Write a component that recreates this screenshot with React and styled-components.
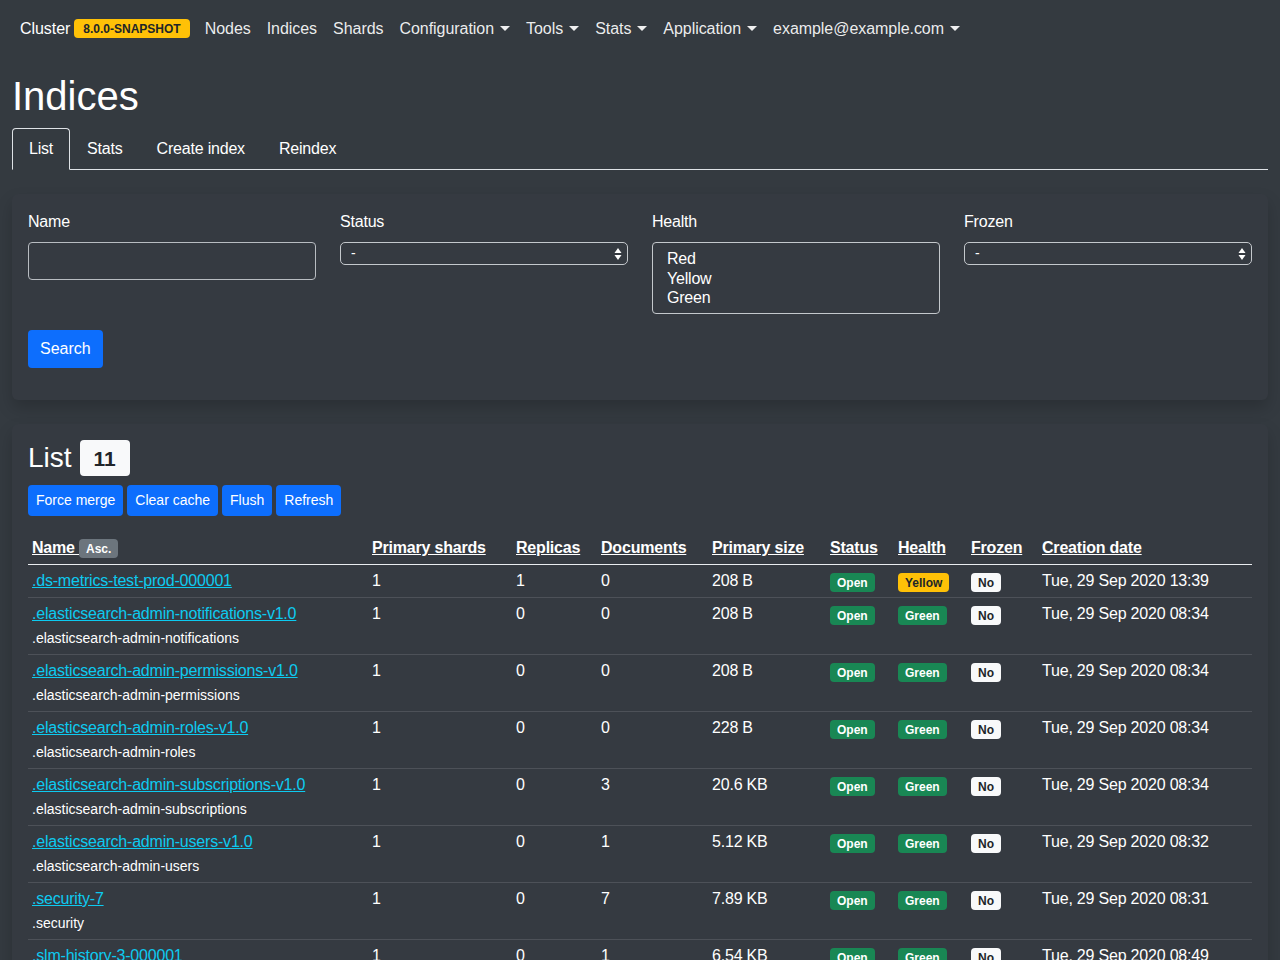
import React from "react";
import styled, { createGlobalStyle } from "styled-components";

const Global = createGlobalStyle`
  html, body { margin: 0; padding: 0; }
  body {
    background: #343a40;
    color: #f8f9fa;
    font-family: "Liberation Sans", Arial, sans-serif;
    font-size: 16px;
    line-height: 1.5;
    letter-spacing: -0.2px;
  }
  * { box-sizing: border-box; }
`;

const Navbar = styled.nav`
  display: flex;
  align-items: center;
  height: 56px;
  padding: 1px 12px 0 20px;
  letter-spacing: -0.05px;
`;

const Brand = styled.div`
  display: flex;
  align-items: center;
  gap: 4px;
  color: #fff;
  margin-right: 7px;
`;

const Badge = styled.span`
  display: inline-block;
  font-size: 12px;
  font-weight: 700;
  line-height: 1;
  letter-spacing: 0;
  padding: 4px ${(p) => p.$px || 7}px 3px;
  border-radius: 4px;
  white-space: nowrap;
  vertical-align: ${(p) => (p.$top ? "top" : "baseline")};
  margin-top: ${(p) => (p.$top ? "4px" : "0")};
  background: ${(p) => p.$bg};
  color: ${(p) => p.$fg || "#fff"};
`;

const NavLink = styled.a`
  display: flex;
  align-items: center;
  padding: 8px;
  color: rgba(255, 255, 255, 0.92);
  text-decoration: none;
  cursor: pointer;
`;

const Caret = styled.span`
  display: inline-block;
  margin-left: 6px;
  width: 0;
  height: 0;
  border-top: 5px solid currentColor;
  border-left: 5px solid transparent;
  border-right: 5px solid transparent;
`;

const Container = styled.main`
  padding: 16px 12px 0;
`;

const Title = styled.h1`
  margin: 0 0 8px;
  font-size: 40px;
  font-weight: 500;
  line-height: 1.2;
  letter-spacing: 0;
  color: #fff;
`;

const Tabs = styled.ul`
  display: flex;
  list-style: none;
  margin: 0;
  padding: 0;
  border-bottom: 1px solid #dee2e6;
`;

const Tab = styled.li`
  margin-bottom: -1px;
  padding: 8px 16px;
  border: 1px solid ${(p) => (p.$active ? "#dee2e6" : "transparent")};
  border-bottom-color: ${(p) => (p.$active ? "#343a40" : "transparent")};
  border-radius: 4px 4px 0 0;
  background: ${(p) => (p.$active ? "#343a40" : "transparent")};
  color: #fff;
  cursor: pointer;
`;

const Card = styled.section`
  margin-top: 24px;
  padding: 16px;
  background: #353a41;
  border-radius: 6px;
  box-shadow: 0 8px 16px rgba(0, 0, 0, 0.18);
`;

const FilterGrid = styled.div`
  display: grid;
  grid-template-columns: repeat(4, 1fr);
  column-gap: 24px;
`;

const Field = styled.div`
  display: flex;
  flex-direction: column;
`;

const Label = styled.label`
  margin-bottom: 8px;
  color: #fff;
`;

const TextInput = styled.input`
  height: 38px;
  padding: 6px 12px;
  border: 1px solid #b8bcc1;
  border-radius: 4px;
  background: transparent;
  color: #fff;
  font: inherit;
`;

const SelectBox = styled.div`
  display: flex;
  align-items: center;
  justify-content: space-between;
  height: 23px;
  padding: 0 5px 0 10px;
  border: 1px solid #c4c8cc;
  border-radius: 5px;
  font-size: 14px;
  color: #fff;
`;

const MultiSelect = styled.div`
  display: flex;
  flex-direction: column;
  height: 72px;
  padding: 6px 14px;
  border: 1px solid #c4c8cc;
  border-radius: 4px;
  color: #fff;
  line-height: 19.5px;
`;

const PrimaryButton = styled.button`
  margin: 16px 0 16px;
  height: 38px;
  padding: 0 12px;
  border: none;
  border-radius: 4px;
  background: #0d6efd;
  color: #fff;
  font: inherit;
  cursor: pointer;
`;

const ListHeader = styled.h3`
  display: flex;
  align-items: center;
  gap: 8px;
  margin: 0 0 8px;
  font-size: 28px;
  font-weight: 500;
  line-height: 1.2;
  letter-spacing: 0;
  color: #fff;
`;

const CountBadge = styled.span`
  display: inline-block;
  padding: 8px 14px 7px;
  border-radius: 4px;
  background: #f8f9fa;
  color: #212529;
  font-size: 21px;
  font-weight: 700;
  line-height: 1;
`;

const ButtonBar = styled.div`
  display: flex;
  gap: 4px;
  margin-top: 9px;
`;

const SmallButton = styled.button`
  height: 31px;
  padding: 0 8px;
  border: none;
  border-radius: 4px;
  background: #0d6efd;
  color: #fff;
  font: inherit;
  font-size: 14px;
  cursor: pointer;
`;

const Table = styled.table`
  width: 100%;
  margin-top: 16px;
  border-collapse: collapse;
  table-layout: fixed;
  color: #fff;
`;

const Th = styled.th`
  padding: 4px;
  text-align: left;
  font-weight: 700;
  white-space: nowrap;
  border-bottom: 1px solid #e9ecef;
`;

const SortLink = styled.a`
  color: #fff;
  text-decoration: underline;
  cursor: pointer;
`;

const Tr = styled.tr`
  border-bottom: 1px solid rgba(255, 255, 255, 0.12);
`;

const Td = styled.td`
  padding: 4px;
  vertical-align: top;
  white-space: nowrap;
  line-height: 24px;
`;

const IndexLink = styled.a`
  color: #0dcaf0;
  text-decoration: underline;
  cursor: pointer;
`;

const Alias = styled.div`
  font-size: 14px;
  line-height: 24px;
  letter-spacing: 0;
`;

function SelectArrows() {
  return (
    <svg width="8" height="14" viewBox="0 0 8 14">
      <path d="M4 1 L7.5 6 L0.5 6 Z" fill="#fff" />
      <path d="M4 13 L7.5 8 L0.5 8 Z" fill="#fff" />
    </svg>
  );
}

const cols = [340, 144, 85, 111, 118, 68, 73, 71, 214];

const rows = [
  { name: ".ds-metrics-test-prod-000001", ps: 1, rep: 1, docs: 0, size: "208 B", health: "Yellow", date: "Tue, 29 Sep 2020 13:39" },
  { name: ".elasticsearch-admin-notifications-v1.0", alias: ".elasticsearch-admin-notifications", ps: 1, rep: 0, docs: 0, size: "208 B", health: "Green", date: "Tue, 29 Sep 2020 08:34" },
  { name: ".elasticsearch-admin-permissions-v1.0", alias: ".elasticsearch-admin-permissions", ps: 1, rep: 0, docs: 0, size: "208 B", health: "Green", date: "Tue, 29 Sep 2020 08:34" },
  { name: ".elasticsearch-admin-roles-v1.0", alias: ".elasticsearch-admin-roles", ps: 1, rep: 0, docs: 0, size: "228 B", health: "Green", date: "Tue, 29 Sep 2020 08:34" },
  { name: ".elasticsearch-admin-subscriptions-v1.0", alias: ".elasticsearch-admin-subscriptions", ps: 1, rep: 0, docs: 3, size: "20.6 KB", health: "Green", date: "Tue, 29 Sep 2020 08:34" },
  { name: ".elasticsearch-admin-users-v1.0", alias: ".elasticsearch-admin-users", ps: 1, rep: 0, docs: 1, size: "5.12 KB", health: "Green", date: "Tue, 29 Sep 2020 08:32" },
  { name: ".security-7", alias: ".security", ps: 1, rep: 0, docs: 7, size: "7.89 KB", health: "Green", date: "Tue, 29 Sep 2020 08:31" },
  { name: ".slm-history-3-000001", alias: ".slm-history-3", ps: 1, rep: 0, docs: 1, size: "6.54 KB", health: "Green", date: "Tue, 29 Sep 2020 08:49" },
  { name: ".tasks", ps: 1, rep: 0, docs: 2, size: "13.1 KB", health: "Green", date: "Tue, 29 Sep 2020 08:35" },
  { name: "ilm-history-2-000001", alias: "ilm-history-2", ps: 1, rep: 0, docs: 18, size: "28.4 KB", health: "Green", date: "Tue, 29 Sep 2020 08:31" },
  { name: "test-index", ps: 1, rep: 1, docs: 4, size: "5.6 KB", health: "Yellow", date: "Tue, 29 Sep 2020 13:40" },
];

const headers = ["Primary shards", "Replicas", "Documents", "Primary size", "Status", "Health", "Frozen", "Creation date"];

export default function App() {
  return (
    <>
      <Global />
      <Navbar>
        <Brand>
          Cluster
          <Badge $bg="#ffc107" $fg="#212529" $px={9}>8.0.0-SNAPSHOT</Badge>
        </Brand>
        <NavLink>Nodes</NavLink>
        <NavLink>Indices</NavLink>
        <NavLink>Shards</NavLink>
        <NavLink>Configuration<Caret /></NavLink>
        <NavLink>Tools<Caret /></NavLink>
        <NavLink>Stats<Caret /></NavLink>
        <NavLink>Application<Caret /></NavLink>
        <NavLink>example@example.com<Caret /></NavLink>
      </Navbar>
      <Container>
        <Title>Indices</Title>
        <Tabs>
          <Tab $active>List</Tab>
          <Tab>Stats</Tab>
          <Tab>Create index</Tab>
          <Tab>Reindex</Tab>
        </Tabs>

        <Card>
          <FilterGrid>
            <Field>
              <Label>Name</Label>
              <TextInput type="text" />
            </Field>
            <Field>
              <Label>Status</Label>
              <SelectBox>
                <span>-</span>
                <SelectArrows />
              </SelectBox>
            </Field>
            <Field>
              <Label>Health</Label>
              <MultiSelect>
                <span>Red</span>
                <span>Yellow</span>
                <span>Green</span>
              </MultiSelect>
            </Field>
            <Field>
              <Label>Frozen</Label>
              <SelectBox>
                <span>-</span>
                <SelectArrows />
              </SelectBox>
            </Field>
          </FilterGrid>
          <PrimaryButton>Search</PrimaryButton>
        </Card>

        <Card>
          <ListHeader>
            List <CountBadge>11</CountBadge>
          </ListHeader>
          <ButtonBar>
            <SmallButton>Force merge</SmallButton>
            <SmallButton>Clear cache</SmallButton>
            <SmallButton>Flush</SmallButton>
            <SmallButton>Refresh</SmallButton>
          </ButtonBar>
          <Table>
            <colgroup>
              {cols.map((w, i) => (
                <col key={i} style={{ width: w }} />
              ))}
            </colgroup>
            <thead>
              <tr>
                <Th>
                  <SortLink>Name </SortLink>
                  <Badge $bg="#6c757d">Asc.</Badge>
                </Th>
                {headers.map((h) => (
                  <Th key={h}>
                    <SortLink>{h}</SortLink>
                  </Th>
                ))}
              </tr>
            </thead>
            <tbody>
              {rows.map((r) => (
                <Tr key={r.name}>
                  <Td>
                    <IndexLink>{r.name}</IndexLink>
                    {r.alias && <Alias>{r.alias}</Alias>}
                  </Td>
                  <Td>{r.ps}</Td>
                  <Td>{r.rep}</Td>
                  <Td>{r.docs}</Td>
                  <Td>{r.size}</Td>
                  <Td>
                    <Badge $top $bg="#198754">Open</Badge>
                  </Td>
                  <Td>
                    {r.health === "Yellow" ? (
                      <Badge $top $bg="#ffc107" $fg="#212529">Yellow</Badge>
                    ) : (
                      <Badge $top $bg="#198754">Green</Badge>
                    )}
                  </Td>
                  <Td>
                    <Badge $top $bg="#f8f9fa" $fg="#212529">No</Badge>
                  </Td>
                  <Td>{r.date}</Td>
                </Tr>
              ))}
            </tbody>
          </Table>
        </Card>
      </Container>
    </>
  );
}
